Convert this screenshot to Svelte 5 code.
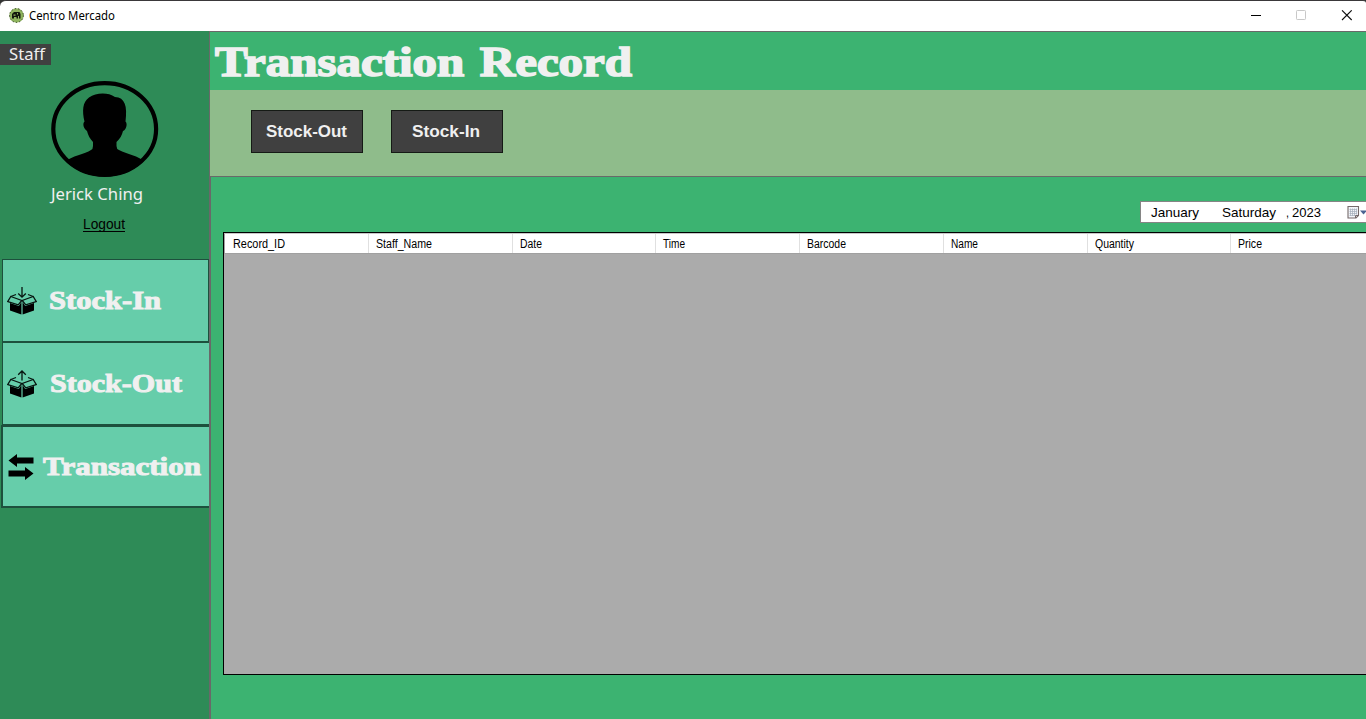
<script>
  const columns = [
    { name: 'Record_ID', size: 144, text: 52 },
    { name: 'Staff_Name', size: 144, text: 56 },
    { name: 'Date', size: 143, text: 22 },
    { name: 'Time', size: 144, text: 22 },
    { name: 'Barcode', size: 144, text: 39 },
    { name: 'Name', size: 144, text: 27 },
    { name: 'Quantity', size: 143, text: 39 },
    { name: 'Price', size: 144, text: 24 }
  ];
</script>

{#snippet label(text, width, height, baseline)}
  <svg class="label" {width} {height}>
    <text x="0" y={baseline} textLength={width} lengthAdjust="spacingAndGlyphs">{text}</text>
  </svg>
{/snippet}

{#snippet box(out)}
  <svg class="box" width="30" height="28" viewBox="0 0 30 28">
    <path d="M3 16L11.800 19L14.400 15V27.500L3 23.500ZM27 16L18.200 19L15.600 15V27.500L27 23.500Z" />
    <path class="flap" d="M3.800 9.500L14.800 13.500L11.200 17.800L.8 14.500ZM26.200 9.500L15.200 13.500L18.800 17.800L29.200 14.500Z" />
    <path class="line" d="M9 7.500L3.800 9.500M21 7.500L26.200 9.500" />
    {#if out}
      <path class="line" d="M15 10.500V1.200M11.200 4.800L15 1L18.800 4.800" />
    {:else}
      <path class="line" d="M15 0V10M11.200 6.500L15 10.200L18.800 6.500" />
    {/if}
  </svg>
{/snippet}

<div class="window">
  <header class="titlebar">
    <svg class="appicon" width="15" height="15" viewBox="0 0 15 15">
      <circle cx="7.5" cy="7.5" r="7.2" fill="#8fb45f" />
      <circle cx="7.5" cy="7.5" r="6.900" fill="none" stroke="#26321b" stroke-width="1" stroke-dasharray="1.2 2.200" />
      <path d="M3 6L5 4H10.500L11.500 6V10.500H10V8H9V10.500H7.500V9H5V10.500H3Z" fill="#10150c" />
      <path d="M4.500 6.500h2v1.200h-2zM8 5h1v1.500H8z" fill="#8fb45f" />
    </svg>
    <span class="app">{@render label('Centro Mercado', 86, 18, 13)}</span>
    <svg class="controls" width="102" height="12" viewBox="0 0 102 12">
      <path d="M0 5.500H10" stroke="#000" />
      <rect x="45.500" y=".5" width="9" height="9" rx=".8" fill="none" stroke="#c8c8c8" />
      <path d="M91 .3L100.700 10M100.700 .3L91 10" stroke="#111" stroke-width="1.1" />
    </svg>
  </header>

  <div class="body">
    <aside>
      <div class="role">{@render label('Staff', 36, 21, 16)}</div>
      <svg class="avatar" width="108" height="97" viewBox="0 0 108 97">
        <defs><clipPath id="disc"><ellipse cx="53.700" cy="49" rx="53" ry="47.500" /></clipPath></defs>
        <ellipse cx="53.700" cy="49" rx="51.400" ry="45.900" fill="none" stroke="#000" stroke-width="4.200" />
        <path clip-path="url(#disc)" d="M13 82C21 76 34 74 40 70Q42 69 42 66V62C39 59 37 55 36 51C33 49 31 44 33.500 41.500C31 31 31.500 22 38 17.500C45 12.500 57 12 64 17C74 17.500 76.500 26 74.500 41.500C77 44 75 50 72 51C71 55 69 59 65.500 62V66Q65.500 69 68 70C76 74 87 76 95 82V97H13Z" />
      </svg>
      <div class="user">{@render label('Jerick Ching', 92, 25, 18)}</div>
      <a class="logout" href="#logout">{@render label('Logout', 42, 15, 12)}</a>
      <nav>
        <button class="item first">{@render box(false)}<span class="n1">{@render label('Stock-In', 112, 32, 24)}</span></button>
        <button class="item">{@render box(true)}<span class="n2">{@render label('Stock-Out', 132, 32, 24)}</span></button>
        <button class="item active">
          <svg class="swap" width="26" height="26" viewBox="0 0 26 26">
            <path d="M.5 6.500L9 0V3.500H25.500V9.500H9V13ZM25.500 19.500L17 13V16.500H.5V22.500H17V26Z" />
          </svg>
          <span class="n3">{@render label('Transaction', 158, 32, 24)}</span>
        </button>
      </nav>
    </aside>

    <main>
      <h1>{@render label('Transaction Record', 417, 50, 39)}</h1>
      <div class="toolbar">
        <button class="out">{@render label('Stock-Out', 81, 22, 16)}</button>
        <button class="in">{@render label('Stock-In', 68, 22, 16)}</button>
      </div>
      <section>
        <div class="picker">
          <span>{@render label('January', 48, 18, 14)}</span>
          <span class="day">{@render label('Saturday', 54, 18, 14)}</span>
          <span class="comma">{@render label(',', 3, 18, 14)}</span>
          <span class="year">{@render label('2023', 29, 18, 14)}</span>
          <svg class="calendar" width="19" height="14" viewBox="0 0 19 14">
            <path d="M1 .5H11.500V9.500L9 12H1Z" fill="#f3f5f9" stroke="#74696a" stroke-width="1.100" />
            <path d="M2.500 3.500H10M2.500 5.500H10M2.500 7.500H10M2.500 9.500H8M3.500 2.500V10M5.500 2.500V10M7.500 2.500V10M9.500 2.500V8.500" stroke="#a4adba" stroke-width=".7" />
            <path d="M8.500 12V9.500H11.500" fill="none" stroke="#74696a" />
            <path d="M13 4.500H20L16.500 8.500Z" fill="#4c6492" />
          </svg>
        </div>
        <div class="grid">
          <div class="head">
            {#each columns as col}
              <div class="cell" style="width: {col.size}px">{@render label(col.name, col.text, 18, 13)}</div>
            {/each}
          </div>
        </div>
      </section>
    </main>
  </div>
</div>

<style>
  :global(body) { margin: 0; overflow: hidden; background: #333; }
  .window { width: 1366px; height: 719px; display: flex; flex-direction: column; overflow: hidden; font-family: "Liberation Sans", Arial, sans-serif; }
  .label { display: block; overflow: visible; flex: none; fill: currentColor; }
  button { font: inherit; margin: 0; padding: 0; border-radius: 0; box-sizing: border-box; }
  .titlebar { height: 31px; box-sizing: border-box; border-top: 1px solid #3a383a; border-radius: 6px 3px 0 0; background: #fff; display: flex; align-items: flex-start; padding: 7px 13px 0 9px; }
  .appicon { flex: none; }
  .app { margin: -1px 0 0 5px; font: 12px "Noto Sans", sans-serif; color: #000; }
  .controls { margin: 2px 0 0 auto; }
  .body { height: 688px; display: flex; }
  aside { width: 209px; background: #2e8b57; display: flex; flex-direction: column; flex: none; }
  .role { width: 42px; height: 21px; margin-top: 13px; padding-left: 9px; background: #404040; color: #f0f0f0; font: 17px "Noto Sans", sans-serif; }
  .avatar { margin: 15px 0 0 51px; flex: none; }
  .user { height: 25px; margin: 5px 0 0 51px; color: #f0f0f0; font: 17px "Noto Sans", sans-serif; }
  .logout { width: 42px; height: 14px; margin: 10px 0 0 83px; color: #000; font-size: 14px; text-decoration: none; border-bottom: 1px solid #000; }
  nav { margin: 27px 0 0 1px; display: flex; flex-direction: column; }
  .item { width: 207px; height: 83px; margin-left: 1px; padding-left: 4px; border: 1px solid #1d503d; border-right: 0; background: #66cdaa; color: #f0f0f0; display: flex; align-items: center; font: bold 26px "Liberation Serif", serif; }
  .item.first { border-right: 1px solid #1d503d; }
  .item.active { width: 208px; margin-left: 0; border-width: 2px 0 2px 2px; padding-left: 5px; }
  .item .label { stroke: #f0f0f0; stroke-width: 1px; }
  .box { flex: none; fill: #000; margin-top: 1px; }
  .line { fill: none; stroke: #07140f; stroke-width: 1.3; }
  .flap { fill: #66cdaa; stroke: #07140f; stroke-width: 1.3; }
  .swap { flex: none; }
  .n1 { margin-left: 12px; }
  .n2 { margin-left: 13px; }
  .n3 { margin-left: 9px; }
  main { flex: 1; min-width: 0; border-left: 1px solid #696969; border-top: 1px solid #696969; background: #3cb371; display: flex; flex-direction: column; }
  h1 { height: 53px; margin: 0; padding: 5px 0 0 5px; color: #f0f0f0; font: bold 42px "Liberation Serif", serif; word-spacing: 3px; }
  h1 .label { stroke: #f0f0f0; stroke-width: 1.6px; }
  .toolbar { height: 66px; padding: 20px 0 0 41px; background: #8fbc8b; display: flex; gap: 28px; flex: none; }
  .toolbar button { width: 112px; height: 43px; border: 1px solid #151a15; background: #404040; color: #f0f0f0; display: flex; align-items: center; font: bold 17px "Liberation Sans", sans-serif; }
  .toolbar .out { padding-left: 14px; }
  .toolbar .in { padding-left: 20px; }
  section { flex: 1; border-top: 1px solid #696969; border-left: 1px solid #696969; padding: 24px 0 0 12px; display: flex; flex-direction: column; align-items: flex-end; overflow: hidden; }
  .picker { width: 226px; height: 22px; box-sizing: border-box; border: 1px solid #858585; border-right: 0; background: #fff; padding: 1px 0 0 10px; display: flex; font-size: 13.3px; flex: none; color: #000; }
  .day { margin-left: 23px; }
  .comma { margin-left: 10px; }
  .year { margin-left: 3px; }
  .calendar { margin: 3px 0 0 26px; flex: none; }
  .grid { width: 1143px; height: 443px; margin-top: 9px; box-sizing: border-box; border: 1px solid #000; border-right: 0; background: #ababab; overflow: hidden; flex: none; }
  .head { height: 21px; box-sizing: border-box; border: 1px solid #a0a0a0; border-right: 0; border-top-color: #c8c8c8; background: #fff; display: flex; font-size: 12px; color: #000; }
  .cell { box-sizing: border-box; flex: none; padding: 1px 0 0 7px; border-right: 1px solid #e0e0e0; }
  .cell:first-child { padding-left: 8px; }
</style>
